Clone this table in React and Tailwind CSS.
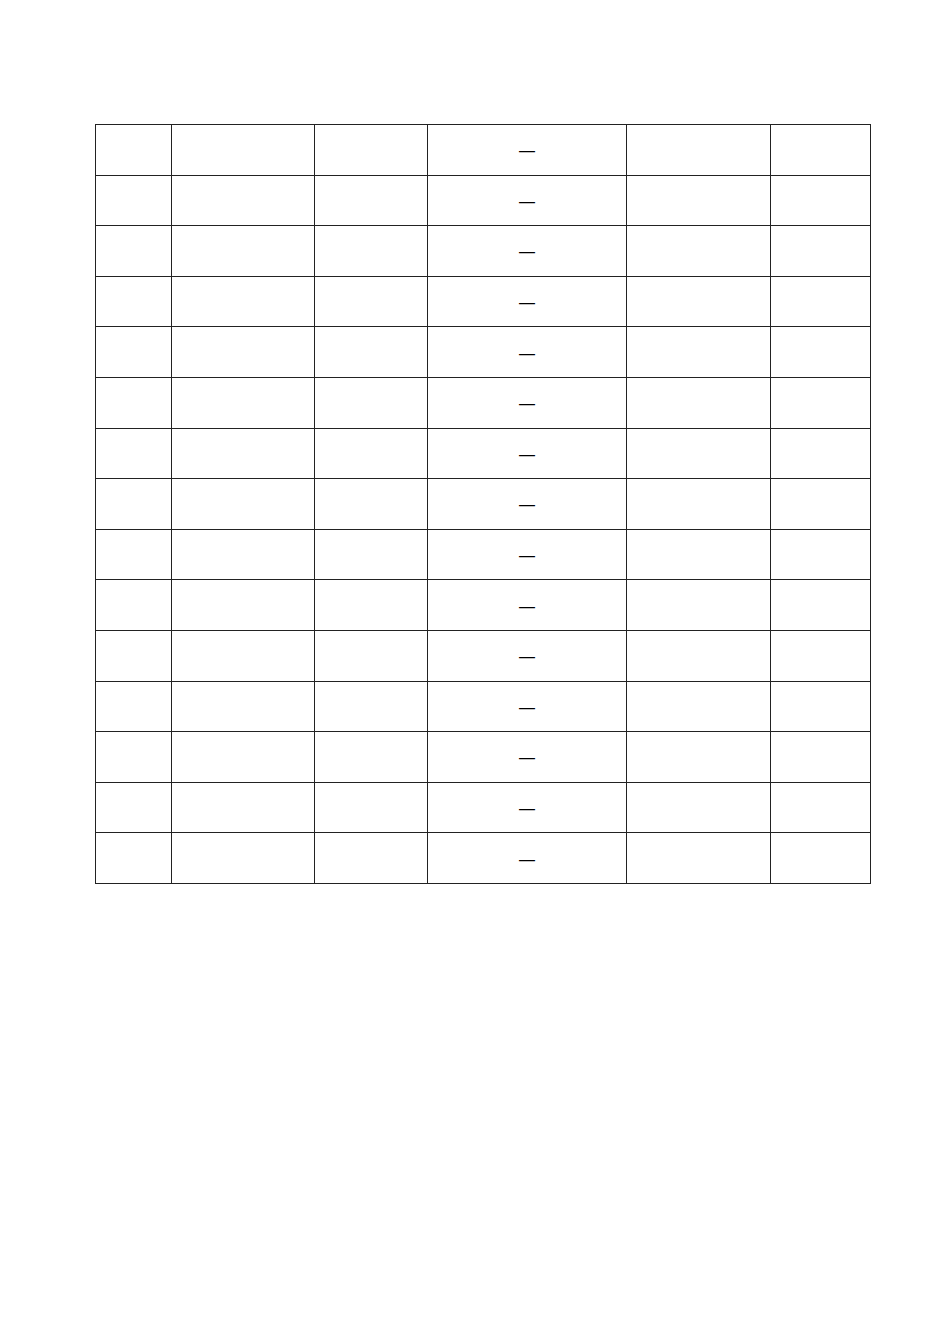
export default function App() {
  const rows = Array.from({ length: 15 });
  return (
    <div className="min-h-[1344px] w-[950px] bg-white pt-[124px] pl-[95px]" style={{ fontFamily: '"Liberation Sans", Arial, sans-serif' }}>
      <table className="border-collapse table-fixed w-[775px] text-[16px] text-black">
        <colgroup>
          <col className="w-[76px]" />
          <col className="w-[143px]" />
          <col className="w-[113px]" />
          <col className="w-[199px]" />
          <col className="w-[144px]" />
          <col className="w-[100px]" />
        </colgroup>
        <tbody>
          {rows.map((_, i) => (
            <tr key={i} className="h-[50.6px]">
              <td className="border border-[#222] p-0"></td>
              <td className="border border-[#222] p-0"></td>
              <td className="border border-[#222] p-0"></td>
              <td className="border border-[#222] p-0 text-center align-middle leading-none pt-[3px]">—</td>
              <td className="border border-[#222] p-0"></td>
              <td className="border border-[#222] p-0"></td>
            </tr>
          ))}
        </tbody>
      </table>
    </div>
  );
}
